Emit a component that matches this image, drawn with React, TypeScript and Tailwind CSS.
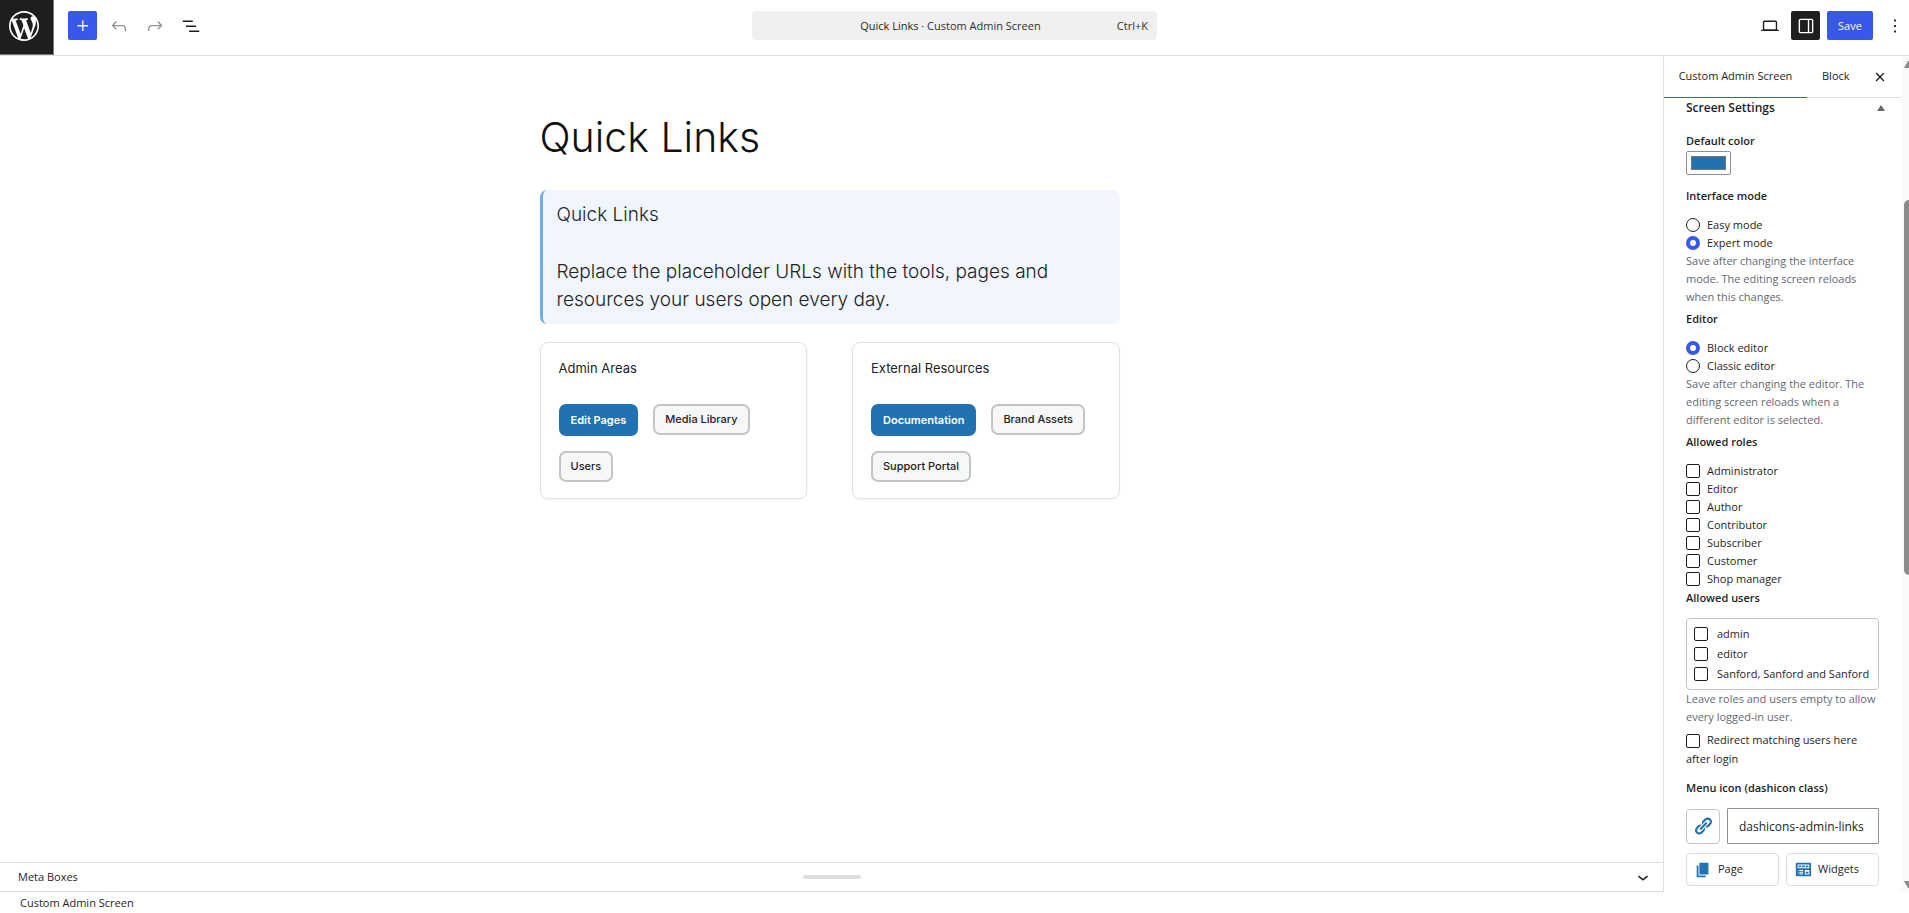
import { useState } from 'react';
import type { ReactNode } from 'react';

const ROLES = ['Administrator', 'Editor', 'Author', 'Contributor', 'Subscriber', 'Customer', 'Shop manager'];
const USERS = ['admin', 'editor', 'Sanford, Sanford and Sanford'];

const CARDS = [
  { title: 'Admin Areas', links: ['Edit Pages', 'Media Library', 'Users'] },
  { title: 'External Resources', links: ['Documentation', 'Brand Assets', 'Support Portal'] },
];

const paths = {
  wordpress:
    'M20 10c0-5.51-4.49-10-10-10C4.48 0 0 4.49 0 10c0 5.52 4.48 10 10 10 5.51 0 10-4.48 10-10zM7.78 15.37L4.37 6.22c.55-.02 1.17-.08 1.17-.08.5-.06.44-1.13-.06-1.11 0 0-1.45.11-2.37.11-.18 0-.37 0-.58-.01C4.12 2.69 6.87 1.11 10 1.11c2.33 0 4.45.87 6.05 2.34-.68-.11-1.65.39-1.65 1.58 0 .74.45 1.36.9 2.1.35.61.55 1.36.55 2.46 0 1.49-1.4 5-1.4 5l-3.03-8.37c.54-.02.82-.17.82-.17.5-.05.44-1.25-.06-1.22 0 0-1.44.12-2.38.12-.87 0-2.33-.12-2.33-.12-.5-.03-.56 1.2-.06 1.22l.92.08 1.26 3.41zM17.41 10c.24-.64.74-1.87.43-4.25.7 1.29 1.05 2.71 1.05 4.25 0 3.29-1.73 6.24-4.4 7.78.97-2.59 1.94-5.2 2.92-7.78zM6.1 18.09C3.12 16.65 1.11 13.53 1.11 10c0-1.3.23-2.48.72-3.59C3.25 10.3 4.67 14.2 6.1 18.09zm4.03-6.63l2.58 6.98c-.86.29-1.76.45-2.71.45-.79 0-1.57-.11-2.29-.33.81-2.38 1.62-4.74 2.42-7.1z',
  plus: 'M11 12.5V17.5H12.5V12.5H17.5V11H12.5V6H11V11H6V12.5H11Z',
  undo: 'M18.3 11.7c-.6-.6-1.4-.9-2.3-.9H6.7l2.9-3.3-1.1-1-4.5 5L8.5 16l1-1-2.7-2.7H16c.5 0 .9.2 1.3.5 1 1 1 3.4 1 4.5v.3h1.5v-.2c0-1.5 0-4.3-1.5-5.7z',
  redo: 'M15.6 6.5l-1.1 1 2.9 3.3H8c-.9 0-1.7.3-2.3.9-1.4 1.5-1.4 4.2-1.4 5.6v.2h1.5v-.3c0-1.1 0-3.5 1-4.5.3-.3.7-.5 1.3-.5h9.2L14.5 15l1.1 1.1 4.6-4.6-4.6-5z',
  listView: 'M3 6h11v1.5H3V6Zm3.5 5.5h11V13h-11v-1.5ZM21 17H10v1.5h11V17Z',
  desktop:
    'M20.5 16h-.7V8c0-1.1-.9-2-2-2H6.2c-1.1 0-2 .9-2 2v8h-.7c-.8 0-1.5.7-1.5 1.5h20c0-.8-.7-1.5-1.5-1.5zM5.7 8c0-.3.2-.5.5-.5h11.6c.3 0 .5.2.5.5v7.6H5.7V8z',
  drawer:
    'M18 4H6c-1.1 0-2 .9-2 2v12c0 1.1.9 2 2 2h12c1.1 0 2-.9 2-2V6c0-1.1-.9-2-2-2zm-4 14.5H6c-.3 0-.5-.2-.5-.5V6c0-.3.2-.5.5-.5h8v13zm4.5-.5c0 .3-.2.5-.5.5h-2.5v-13H18c.3 0 .5.2.5.5v12z',
  more: 'M13 19h-2v-2h2v2zm0-6h-2v-2h2v2zm0-6h-2V5h2v2z',
  close:
    'M12 13.06l3.712 3.713 1.061-1.06L13.061 12l3.712-3.712-1.06-1.06L12 10.938 8.288 7.227l-1.061 1.06L10.939 12l-3.712 3.712 1.06 1.061L12 13.061z',
  chevron: 'M17.5 11.6L12 16l-5.5-4.4.9-1.2L12 14l4.5-3.6 1 1.2z',
  links:
    'M17.74 2.76c1.68 1.69 1.68 4.41 0 6.1l-1.53 1.52c-1.12 1.12-2.7 1.47-4.14 1.09l2.62-2.61.76-.77.76-.76c.84-.84.84-2.2 0-3.04-.84-.85-2.2-.85-3.04 0l-.77.76-3.38 3.38c-.37-1.44-.02-3.02 1.1-4.14l1.52-1.53c1.69-1.68 4.42-1.68 6.1 0zM8.59 13.43l5.34-5.34c.42-.42.42-1.1 0-1.52-.44-.43-1.13-.39-1.53 0l-5.33 5.34c-.42.42-.42 1.1 0 1.52.44.43 1.13.39 1.52 0zm-.76 2.29l4.14-4.15c.38 1.44.03 3.02-1.09 4.14l-1.52 1.53c-1.69 1.68-4.41 1.68-6.1 0-1.68-1.68-1.68-4.42 0-6.1l1.53-1.52c1.12-1.12 2.7-1.47 4.14-1.1l-4.14 4.15c-.85.84-.85 2.2 0 3.05.84.84 2.2.84 3.04 0z',
  page: 'M6 15V2h10v13H6zm-1 1h8v2H3V5h2v11z',
  widgets:
    'M19 16V3c0-.55-.45-1-1-1H3c-.55 0-1 .45-1 1v13c0 .55.45 1 1 1h15c.55 0 1-.45 1-1zM4 4h13v4H4V4zm1 1v2h3V5H5zm4 0v2h3V5H9zm4 0v2h3V5h-3zm-8.5 5c.28 0 .5.22.5.5s-.22.5-.5.5-.5-.22-.5-.5.22-.5.5-.5zM6 10h4v1H6v-1zm6 0h5v5h-5v-5zm-7.5 2c.28 0 .5.22.5.5s-.22.5-.5.5-.5-.22-.5-.5.22-.5.5-.5zM6 12h4v1H6v-1zm7 0v2h3v-2h-3zm-8.5 2c.28 0 .5.22.5.5s-.22.5-.5.5-.5-.22-.5-.5.22-.5.5-.5zM6 14h4v1H6v-1z',
};

interface IconProps {
  name: keyof typeof paths;
  box?: string;
  className?: string;
}

const Icon = ({ name, box = '0 0 24 24', className = 'size-[22px]' }: IconProps) => (
  <svg viewBox={box} className={className} fill="currentColor" fillRule="evenodd" aria-hidden="true">
    <path d={paths[name]} />
  </svg>
);

const IconButton = ({ label, className = '', children }: { label: string; className?: string; children: ReactNode }) => (
  <button aria-label={label} className={`flex size-[29px] shrink-0 items-center justify-center rounded-xs ${className}`}>
    {children}
  </button>
);

const Radio = ({ name, label, checked, onChange }: { name: string; label: string; checked: boolean; onChange: () => void }) => (
  <label className="flex h-[18px] items-center gap-[7px]">
    <input
      type="radio"
      name={name}
      checked={checked}
      onChange={onChange}
      className="size-[14px] shrink-0 appearance-none rounded-full border border-[#1e1e1e] bg-white checked:border-4 checked:border-[#3858e9]"
    />
    {label}
  </label>
);

const checkboxClass =
  'size-[14px] shrink-0 appearance-none rounded-xs border border-[#1e1e1e] bg-white checked:bg-[#3858e9]';

const Help = ({ children }: { children: ReactNode }) => <p className="leading-[18px] text-[#646970]">{children}</p>;

const Header = () => (
  <header className="grid h-14 shrink-0 grid-cols-[1fr_405px_1fr] items-start border-b border-[#e0e0e0]">
    <div className="flex items-start">
      <a href="#" aria-label="View Posts" className="h-[55px] w-[54px] border-r border-b border-[#757575] bg-[#1e1e1e] pt-2 pl-[6px] text-white">
        <Icon name="wordpress" box="-2 -2 24 24" className="size-9" />
      </a>
      <div className="flex gap-[7px] pt-[11px] pl-[14px]">
        <IconButton label="Block Inserter" className="bg-[#3858e9] text-white">
          <Icon name="plus" />
        </IconButton>
        <IconButton label="Undo" className="text-[#949494]">
          <Icon name="undo" />
        </IconButton>
        <IconButton label="Redo" className="text-[#949494]">
          <Icon name="redo" />
        </IconButton>
        <IconButton label="Document Overview">
          <Icon name="listView" />
        </IconButton>
      </div>
    </div>
    <button className="mt-[11px] flex h-[29px] items-center rounded-sm bg-[#f0f0f0] pt-[2px] pr-[9px] pl-8">
      <span className="flex-1 text-center">
        Quick Links <span className="text-[#2f2f2f]">· Custom Admin Screen</span>
      </span>
      <span className="text-[#2f2f2f]">Ctrl+K</span>
    </button>
    <div className="flex justify-end gap-[7px] pt-[11px]">
      <IconButton label="View">
        <Icon name="desktop" />
      </IconButton>
      <IconButton label="Settings" className="bg-[#1e1e1e] text-white">
        <Icon name="drawer" />
      </IconButton>
      <button className="h-[29px] w-[46px] rounded-xs bg-[#3858e9] pt-[2px] text-white">Save</button>
      <IconButton label="Options">
        <Icon name="more" />
      </IconButton>
    </div>
  </header>
);

const Canvas = () => (
  <main className="min-h-0 flex-1 overflow-hidden pr-1 font-[Inter,sans-serif]">
    <div className="mx-auto w-full max-w-[580px] pt-[52px]">
      <h1 className="text-[41px] leading-[58px] font-light text-[#111]">Quick Links</h1>
      <section className="mt-6 rounded-[7px] border-l-[3px] border-[#72aee6] bg-[#f0f6fc] pt-[11px] pr-4 pb-[10px] pl-[14px] text-[19px] leading-7 font-light text-[#1d2327]">
        <h2>Quick Links</h2>
        <p className="mt-[29px]">Replace the placeholder URLs with the tools, pages and resources your users open every day.</p>
      </section>
      <div className="mt-[18px] grid grid-cols-2 gap-[45px]">
        {CARDS.map((card) => (
          <section key={card.title} className="rounded-lg border border-[#e0e0e0] px-[18px] pt-[15px] pb-4 shadow-xs">
            <h3 className="text-[13px] leading-5 text-[#1d2327]">{card.title}</h3>
            <div className="mt-[26px] flex flex-wrap gap-[15px]">
              {card.links.map((link, i) => (
                <a
                  key={link}
                  href="#"
                  className={
                    i === 0
                      ? 'flex h-8 items-center rounded-[7px] border-2 border-[#2271b1] bg-[#2271b1] px-[10px] text-[11px] font-semibold text-white'
                      : 'flex h-[31px] items-center rounded-[7px] border-2 border-[#c3c4c7] bg-[#f6f7f7] px-[10px] text-[11px] font-medium text-[#1d2327]'
                  }
                >
                  {link}
                </a>
              ))}
            </div>
          </section>
        ))}
      </div>
    </div>
  </main>
);

const Sidebar = () => {
  const [mode, setMode] = useState('Expert mode');
  const [editor, setEditor] = useState('Block editor');

  return (
    <aside className="flex w-[246px] shrink-0 border-l border-[#e0e0e0]">
      <div className="flex min-w-0 flex-1 flex-col">
        <div className="flex h-[42px] shrink-0 items-stretch border-b border-[#e0e0e0]">
          <button className="-mb-px w-[143px] border-b border-[#3858e9]">Custom Admin Screen</button>
          <button className="px-[15px]">Block</button>
          <button aria-label="Close Settings" className="mr-[10px] ml-auto">
            <Icon name="close" />
          </button>
        </div>
        <button className="flex h-5 shrink-0 items-center justify-between pr-4 pl-[22px] text-[12px] font-semibold">
          Screen Settings
          <svg viewBox="0 0 8 6" className="h-[6px] w-2 text-[#646970]" fill="currentColor" aria-hidden="true">
            <path d="M4 0l4 6H0z" />
          </svg>
        </button>
        <div className="min-h-0 flex-1 overflow-hidden px-[22px]">
          <label htmlFor="default-color" className="mt-[14px] block leading-[18px] font-semibold">
            Default color
          </label>
          <input
            id="default-color"
            type="color"
            defaultValue="#2271b1"
            className="mt-[1px] block h-6 w-[45px] rounded-xs border border-[#8c8f94] bg-white px-[2px] py-0"
          />
          <fieldset className="mt-3">
            <legend className="mb-[11px] leading-[18px] font-semibold">Interface mode</legend>
            {['Easy mode', 'Expert mode'].map((item) => (
              <Radio key={item} name="mode" label={item} checked={mode === item} onChange={() => setMode(item)} />
            ))}
          </fieldset>
          <Help>Save after changing the interface mode. The editing screen reloads when this changes.</Help>
          <fieldset className="mt-1">
            <legend className="mb-[11px] leading-[18px] font-semibold">Editor</legend>
            {['Block editor', 'Classic editor'].map((item) => (
              <Radio key={item} name="editor" label={item} checked={editor === item} onChange={() => setEditor(item)} />
            ))}
          </fieldset>
          <Help>Save after changing the editor. The editing screen reloads when a different editor is selected.</Help>
          <fieldset className="mt-1">
            <legend className="mb-[11px] leading-[18px] font-semibold">Allowed roles</legend>
            {ROLES.map((role) => (
              <label key={role} className="flex h-[18px] items-center gap-[7px]">
                <input type="checkbox" className={checkboxClass} />
                {role}
              </label>
            ))}
          </fieldset>
          <fieldset className="mt-px">
            <legend className="mb-[11px] leading-[18px] font-semibold">Allowed users</legend>
            <div className="flex h-[72px] flex-col justify-center gap-[6px] rounded-[4px] border border-[#c3c4c7] pl-[7px]">
              {USERS.map((user) => (
                <label key={user} className="flex h-[14px] items-center gap-[9px] whitespace-nowrap">
                  <input type="checkbox" className={checkboxClass} />
                  {user}
                </label>
              ))}
            </div>
          </fieldset>
          <Help>Leave roles and users empty to allow every logged-in user.</Help>
          <label className="mt-1 block leading-[19px]">
            <input type="checkbox" className={`${checkboxClass} mr-[7px] align-middle`} />
            Redirect matching users here after login
          </label>
          <label htmlFor="menu-icon" className="mt-[11px] block leading-[18px] font-semibold">
            Menu icon (dashicon class)
          </label>
          <div className="mt-[11px] flex items-center gap-[7px]">
            <span className="flex h-[35px] w-[34px] shrink-0 items-center justify-center rounded-[4px] border border-[#c3c4c7] text-[#2271b1]">
              <Icon name="links" box="0 0 20 20" className="size-5" />
            </span>
            <input
              id="menu-icon"
              defaultValue="dashicons-admin-links"
              className="h-9 w-full min-w-0 rounded-[1px] border border-[#8c8f94] px-[11px] text-[12px]"
            />
          </div>
          <div className="mt-[9px] grid grid-cols-2 gap-[7px]">
            <button className="flex h-[33px] items-center gap-[6px] rounded-[4px] border border-[#dcdcde] pl-[7px]">
              <Icon name="page" box="0 0 20 20" className="size-[18px] text-[#2271b1]" />
              Page
            </button>
            <button className="flex h-[33px] items-center gap-[6px] rounded-[4px] border border-[#dcdcde] pl-[7px]">
              <Icon name="widgets" box="0 0 20 20" className="size-[18px] text-[#2271b1]" />
              Widgets
            </button>
          </div>
        </div>
      </div>
      <div className="flex w-2 shrink-0 flex-col overflow-hidden bg-[#fafafa] pt-[5px] pb-1 pl-[3px] text-[#8b8b8b]" aria-hidden="true">
        <svg viewBox="0 0 10 7" className="h-[7px] w-[10px] shrink-0" fill="currentColor">
          <path d="M4 0h2l4 7H0z" />
        </svg>
        <div className="mt-[132px] h-[375px] w-[10px] rounded-full bg-current" />
        <svg viewBox="0 0 10 7" className="mt-auto h-[7px] w-[10px] shrink-0" fill="currentColor">
          <path d="M0 0h10L6 7H4z" />
        </svg>
      </div>
    </aside>
  );
};

export default function App() {
  return (
    <div className="flex h-screen flex-col overflow-hidden bg-white font-['Open_Sans',sans-serif] text-[11px] text-[#1e1e1e]">
      <Header />
      <div className="flex min-h-0 flex-1">
        <div className="flex min-w-0 flex-1 flex-col">
          <Canvas />
          <button className="grid h-[30px] shrink-0 grid-cols-[1fr_auto_1fr] items-center border-y border-[#e0e0e0] px-[9px]">
            <span className="pl-[9px] text-left">Meta Boxes</span>
            <span className="h-1 w-[58px] rounded-full bg-[#ddd]" />
            <Icon name="chevron" className="ml-auto size-[22px]" />
          </button>
        </div>
        <Sidebar />
      </div>
      <footer className="flex h-[21px] shrink-0 items-center pt-[2px] pl-5">Custom Admin Screen</footer>
    </div>
  );
}
